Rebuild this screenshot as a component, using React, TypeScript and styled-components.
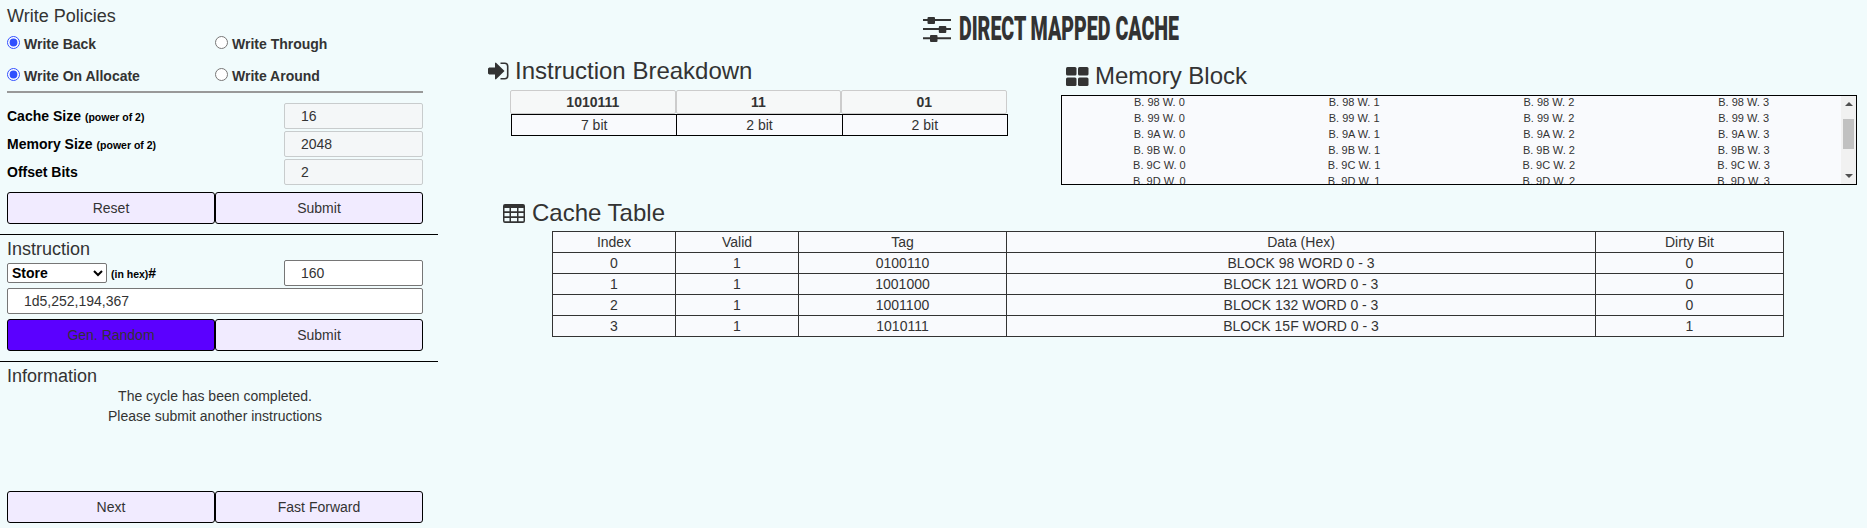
import React from "react";
import styled, { createGlobalStyle } from "styled-components";

const GlobalStyle = createGlobalStyle`
  *, *::before, *::after { box-sizing: border-box; }
  body {
    margin: 0;
    background: #f1fbfc;
    color: #333;
    font: 14px/20px "Liberation Sans", Arial, sans-serif;
    overflow: hidden;
  }
`;

const Page = styled.div`
  display: flex;
  height: 528px;
`;

const Sidebar = styled.aside`
  width: 438px;
  flex: none;
`;

const Panel = styled.section<{ $height: number; $divider?: boolean }>`
  height: ${(p) => p.$height}px;
  padding: 0 15px 0 7px;
  border-bottom: ${(p) => (p.$divider ? "1px solid #000" : "none")};
  display: flex;
  flex-direction: column;
`;

const PanelTitle = styled.h4<{ $top: number; $bottom?: number }>`
  margin: ${(p) => p.$top}px 0 ${(p) => p.$bottom ?? 0}px;
  height: 20px;
  font-size: 18px;
  font-weight: 400;
  line-height: 20px;
`;

const RadioRow = styled.div<{ $height: number }>`
  display: grid;
  grid-template-columns: 1fr 1fr;
  height: ${(p) => p.$height}px;
`;

const RadioLabel = styled.label`
  display: flex;
  align-items: flex-start;
  gap: 4px;
  font-weight: 700;
  line-height: 20px;
`;

const Radio = styled.input`
  margin: 2px 0 0;
  width: 13px;
  height: 13px;
  accent-color: #304ffe;
`;

const Rule = styled.hr`
  width: 416px;
  height: 2px;
  margin: 0 0 10px;
  border: 0;
  background: #999;
`;

const Field = styled.div`
  display: flex;
  align-items: center;
  height: 26px;
  margin-bottom: 2px;
  color: #000;
  font-weight: 700;
`;

const Hint = styled.span`
  font-size: 10.5px;
  margin: 2px 0 0 4px;
`;

const TextInput = styled.input<{ $full?: boolean }>`
  width: ${(p) => (p.$full ? 416 : 139)}px;
  height: 26px;
  margin: 0 0 0 auto;
  padding: 0 16px;
  border: 1px solid #767676;
  border-radius: 2px;
  background: #fff;
  color: #333;
  font: 400 14px "Liberation Sans", Arial, sans-serif;
  &:disabled {
    border-color: #c8cccd;
    background: #f4f7f8;
  }
`;

const Select = styled.select`
  width: 100px;
  height: 20px;
  padding: 0;
  border: 1px solid #767676;
  border-radius: 2px;
  background-color: #fff;
  color: #000;
  font: 700 14px "Liberation Sans", Arial, sans-serif;
`;

const ButtonRow = styled.div<{ $top: number }>`
  display: flex;
  margin-top: ${(p) => p.$top}px;
`;

const Button = styled.button<{ $active?: boolean }>`
  width: 208px;
  height: 32px;
  padding: 0;
  border: 1px solid #000;
  border-radius: 3px;
  background: ${(p) => (p.$active ? "#5b00ff" : "#f1ebff")};
  color: #333;
  font: 14px "Liberation Sans", Arial, sans-serif;
`;

const Message = styled.p`
  margin: 0;
  height: 100px;
  text-align: center;
`;

const Main = styled.main`
  flex: 1;
  display: flex;
  flex-direction: column;
`;

const TitleBar = styled.header`
  display: flex;
  height: 50px;
  padding: 15px 0 0 485px;
  gap: 8px;
`;

const Columns = styled.div`
  display: flex;
  height: 146px;
`;

const Breakdown = styled.section`
  width: 623px;
  padding: 7px 0 0 50px;
`;

const Memory = styled.section`
  padding-top: 12px;
`;

const Heading = styled.h3<{ $indent?: number; $gap?: number }>`
  display: flex;
  align-items: center;
  gap: ${(p) => p.$gap ?? 7}px;
  height: 28px;
  margin: 0;
  padding-left: ${(p) => p.$indent ?? 0}px;
  font-size: 24px;
  font-weight: 400;
  line-height: 28px;
`;

const BitsRow = styled.div`
  display: flex;
  width: 497px;
  margin: 5px 0 0 22px;
`;

const BitInput = styled.input`
  flex: 1;
  min-width: 0;
  height: 24px;
  padding: 0;
  border: 1px solid #ccc;
  border-radius: 2px;
  background: #f6f8f8;
  color: #333;
  text-align: center;
  font: 700 14px "Liberation Sans", Arial, sans-serif;
`;

const Grid = styled.table<{ $color: string; $width: number; $left: number; $top?: number }>`
  width: ${(p) => p.$width}px;
  margin: ${(p) => p.$top ?? 0}px 0 0 ${(p) => p.$left}px;
  border-collapse: collapse;
  table-layout: fixed;
  background: #f9fafd;
  text-align: center;
  td {
    height: 21px;
    padding: 0;
    border: 1px solid ${(p) => p.$color};
    line-height: 20px;
  }
`;

const Col = styled.col<{ $width?: number }>`
  width: ${(p) => (p.$width ? `${p.$width}px` : "auto")};
`;

const MemoryBox = styled.div`
  display: flex;
  width: 796px;
  height: 90px;
  margin-top: 5px;
  border: 1px solid #000;
  background: #f9fafd;
  overflow: hidden;
`;

const WordGrid = styled.div`
  flex: 1;
  display: grid;
  grid-template-columns: repeat(4, 1fr);
  grid-auto-rows: 15.71px;
  margin-top: -0.6px;
  font-size: 11px;
  line-height: 15.71px;
  text-align: center;
`;

const ScrollTrack = styled.div`
  display: flex;
  flex-direction: column;
  align-items: center;
  width: 15px;
  background: #f1f1f1;
`;

const Thumb = styled.div`
  width: 11px;
  height: 30px;
  margin: 7px 2px 25px 2px;
  background: #c1c1c1;
`;

const Arrow = styled.div<{ $down?: boolean }>`
  border: 4px solid transparent;
  border-width: ${(p) => (p.$down ? "4px 4px 0" : "0 4px 4px")};
  border-${(p) => (p.$down ? "top" : "bottom")}-color: #505050;
  margin-top: ${(p) => (p.$down ? 0 : 6)}px;
  margin-bottom: ${(p) => (p.$down ? 0 : 6)}px;
`;

const CacheSection = styled.section`
  padding-top: 3px;
`;

const SlidersIcon = () => (
  <svg width="28" height="28" viewBox="0 0 28 28" fill="#333">
    <path d="M0 4h28v2H0zM0 13h28v2H0zM0 22.300h28v2H0z" />
    <rect x="4.500" y="2" width="7.500" height="7" rx="1" />
    <rect x="15.800" y="11" width="7.500" height="7" rx="1" />
    <rect x="7" y="20" width="7.500" height="7" rx="1" />
  </svg>
);

const SignInIcon = () => (
  <svg width="21" height="18" viewBox="0 0 21 18" fill="#333">
    <path d="M1.200 5.500H7V1l.8-.4L16.500 9l-8.700 8.400L7 17v-4.500H1.200L0 11.500v-5z" />
    <path d="M12.500 1.300h4.200a3 3 0 0 1 3 3v9.400a3 3 0 0 1-3 3h-4.200" fill="none" stroke="#333" strokeWidth="1.600" />
  </svg>
);

const TableIcon = () => (
  <svg width="22" height="19" viewBox="0 0 22 19">
    <path
      fill="#333"
      fillRule="evenodd"
      d="M2 0h18a2 2 0 0 1 2 2v15a2 2 0 0 1-2 2H2a2 2 0 0 1-2-2V2a2 2 0 0 1 2-2zM1.500 4v3.300h5V4zM8 4v3.300h6V4zM15.500 4v3.300h5V4zM1.500 9v3.300h5V9zM8 9v3.300h6V9zM15.500 9v3.300h5V9zM1.500 14v3.300h5V14zM8 14v3.300h6V14zM15.500 14v3.300h5V14z"
    />
  </svg>
);

const BlocksIcon = () => (
  <svg width="23" height="19" viewBox="0 0 23 19" fill="#333">
    <rect x="0" y="0" width="10.500" height="8.500" rx="1.500" />
    <rect x="12" y="0" width="10.500" height="8.500" rx="1.500" />
    <rect x="0" y="10.500" width="10.500" height="8.500" rx="1.500" />
    <rect x="12" y="10.500" width="10.500" height="8.500" rx="1.500" />
  </svg>
);

const TitleText = styled.svg`
  display: block;
  overflow: visible;
  text {
    font: 900 32.5px Roboto, sans-serif;
    fill: #333;
  }
`;

const sizes = [
  { label: "Cache Size", hint: "(power of 2)", value: "16" },
  { label: "Memory Size", hint: "(power of 2)", value: "2048" },
  { label: "Offset Bits", hint: "", value: "2" },
];
const blocks = ["98", "99", "9A", "9B", "9C", "9D"];
const cacheRows = [
  ["Index", "Valid", "Tag", "Data (Hex)", "Dirty Bit"],
  ["0", "1", "0100110", "BLOCK 98 WORD 0 - 3", "0"],
  ["1", "1", "1001000", "BLOCK 121 WORD 0 - 3", "0"],
  ["2", "1", "1001100", "BLOCK 132 WORD 0 - 3", "0"],
  ["3", "1", "1010111", "BLOCK 15F WORD 0 - 3", "1"],
];

export default function App() {
  return (
    <>
      <GlobalStyle />
      <Page>
        <Sidebar>
          <Panel $height={235} $divider>
            <PanelTitle $top={6} $bottom={8}>Write Policies</PanelTitle>
            <RadioRow $height={32}>
              <RadioLabel><Radio type="radio" name="hit" defaultChecked />Write Back</RadioLabel>
              <RadioLabel><Radio type="radio" name="hit" />Write Through</RadioLabel>
            </RadioRow>
            <RadioRow $height={25}>
              <RadioLabel><Radio type="radio" name="miss" defaultChecked />Write On Allocate</RadioLabel>
              <RadioLabel><Radio type="radio" name="miss" />Write Around</RadioLabel>
            </RadioRow>
            <Rule />
            {sizes.map((s) => (
              <Field key={s.label}>
                {s.label}
                {s.hint && <Hint>{s.hint}</Hint>}
                <TextInput disabled defaultValue={s.value} />
              </Field>
            ))}
            <ButtonRow $top={5}>
              <Button>Reset</Button>
              <Button>Submit</Button>
            </ButtonRow>
          </Panel>
          <Panel $height={127} $divider>
            <PanelTitle $top={4} $bottom={1}>Instruction</PanelTitle>
            <Field>
              <Select defaultValue="Store"><option>Store</option><option>Load</option></Select>
              <Hint>(in hex)</Hint>#
              <TextInput defaultValue="160" />
            </Field>
            <TextInput $full defaultValue="1d5,252,194,367" />
            <ButtonRow $top={5}>
              <Button $active>Gen. Random</Button>
              <Button>Submit</Button>
            </ButtonRow>
          </Panel>
          <Panel $height={166}>
            <PanelTitle $top={4}>Information</PanelTitle>
            <Message>The cycle has been completed.<br />Please submit another instructions</Message>
            <ButtonRow $top={5}>
              <Button>Next</Button>
              <Button>Fast Forward</Button>
            </ButtonRow>
          </Panel>
        </Sidebar>
        <Main>
          <TitleBar>
            <SlidersIcon />
            <TitleText width="222" height="34">
              <text x="0" y="25" textLength="220" lengthAdjust="spacingAndGlyphs">DIRECT MAPPED CACHE</text>
            </TitleText>
          </TitleBar>
          <Columns>
            <Breakdown>
              <Heading $gap={6}><SignInIcon />Instruction Breakdown</Heading>
              <BitsRow>
                <BitInput disabled defaultValue="1010111" />
                <BitInput disabled defaultValue="11" />
                <BitInput disabled defaultValue="01" />
              </BitsRow>
              <Grid $color="#000" $width={497} $left={23}>
                <tbody><tr><td>7 bit</td><td>2 bit</td><td>2 bit</td></tr></tbody>
              </Grid>
            </Breakdown>
            <Memory>
              <Heading $indent={5} $gap={6}><BlocksIcon />Memory Block</Heading>
              <MemoryBox>
                <WordGrid>
                  {blocks.flatMap((b) => [0, 1, 2, 3].map((w) => <span key={b + w}>{`B. ${b} W. ${w}`}</span>))}
                </WordGrid>
                <ScrollTrack><Arrow /><Thumb /><Arrow $down /></ScrollTrack>
              </MemoryBox>
            </Memory>
          </Columns>
          <CacheSection>
            <Heading $indent={65}><TableIcon />Cache Table</Heading>
            <Grid $color="#333" $width={1232} $left={114} $top={4}>
              <colgroup>
                <Col $width={123} /><Col $width={123} /><Col $width={208} /><Col /><Col $width={188} />
              </colgroup>
              <tbody>
                {cacheRows.map((row) => (
                  <tr key={row[0]}>{row.map((cell, i) => <td key={i}>{cell}</td>)}</tr>
                ))}
              </tbody>
            </Grid>
          </CacheSection>
        </Main>
      </Page>
    </>
  );
}
